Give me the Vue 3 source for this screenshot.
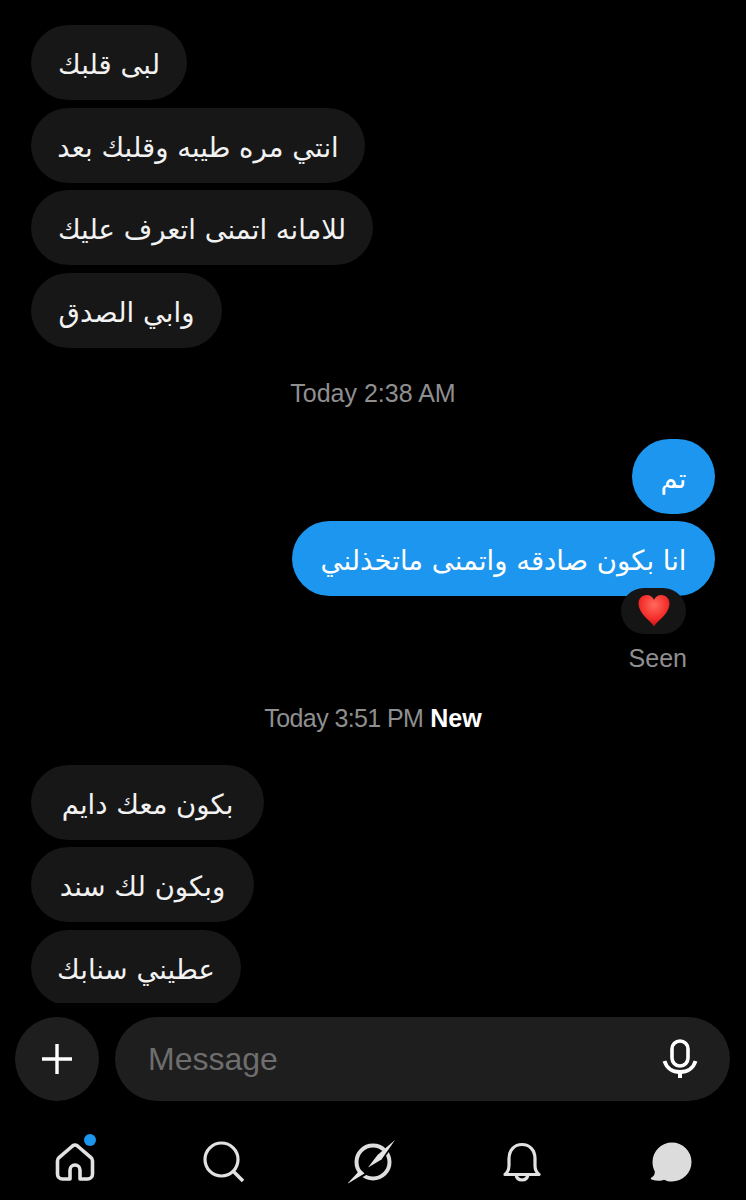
<script setup>
const firstGroup = [
  { text: 'لبى قلبك', width: 156 },
  { text: 'انتي مره طيبه وقلبك بعد', width: 334 },
  { text: 'للامانه اتمنى اتعرف عليك', width: 342 },
  { text: 'وابي الصدق', width: 191 }
]
const secondGroup = [
  { text: 'بكون معك دايم', width: 233 },
  { text: 'وبكون لك سند', width: 223 },
  { text: 'عطيني سنابك', width: 210 }
]
const sent = [
  { text: 'تم', width: 83 },
  { text: 'انا بكون صادقه واتمنى ماتخذلني', width: 423 }
]
</script>

<template>
  <div class="screen">
    <div class="messages">
      <div class="group">
        <div
          v-for="m in firstGroup"
          :key="m.text"
          class="bubble in"
          dir="rtl"
          :style="{ width: m.width + 'px' }"
        >{{ m.text }}</div>
      </div>

      <p class="stamp first-stamp">Today 2:38 AM</p>

      <div class="group mine">
        <div
          v-for="m in sent"
          :key="m.text"
          class="bubble out"
          dir="rtl"
          :style="{ width: m.width + 'px' }"
        >{{ m.text }}</div>
        <div class="reaction">
          <svg width="32" height="33" viewBox="0 0 32 33">
            <defs>
              <radialGradient id="heart" cx="0.5" cy="0.32" r="0.7">
                <stop offset="0" stop-color="#ff6a5e" />
                <stop offset="0.6" stop-color="#f5302c" />
                <stop offset="1" stop-color="#c40f14" />
              </radialGradient>
            </defs>
            <path d="M16 32.500C13 27 .5 20 .5 9.500.5 4.500 4.200 1 8.700 1c3.200 0 5.900 1.700 7.300 4.700C17.400 2.700 20.100 1 23.300 1c4.500 0 8.200 3.500 8.200 8.500C31.500 20 19 27 16 32.500z" fill="url(#heart)" />
          </svg>
        </div>
        <p class="seen">Seen</p>
      </div>

      <p class="stamp second-stamp"><span class="tight">Today 3:51 PM</span> <b>New</b></p>

      <div class="group">
        <div
          v-for="m in secondGroup"
          :key="m.text"
          class="bubble in"
          dir="rtl"
          :style="{ width: m.width + 'px' }"
        >{{ m.text }}</div>
      </div>
    </div>

    <div class="composer">
      <button class="plus">
        <svg width="34" height="34" viewBox="0 0 34 34">
          <path d="M17 2v30M2 17h30" stroke="#fff" stroke-width="3.400" fill="none" />
        </svg>
      </button>
      <div class="field">
        <span class="placeholder">Message</span>
        <svg class="mic" width="36" height="40" viewBox="0 0 36 40" fill="none" stroke="#fff">
          <rect x="10" y="2" width="16" height="25" rx="8" stroke-width="3.600" />
          <path d="M2.500 22c2 7 8 11 15.500 11s13.500-4 15.500-11" stroke-width="3.800" />
          <path d="M18 32v7" stroke-width="4" />
        </svg>
      </div>
    </div>

    <nav class="tabs">
      <div class="tab">
        <span class="dot"></span>
        <svg width="42" height="42" viewBox="0 0 42 42" fill="none" stroke="#e2e2e2" stroke-width="3.600">
          <path d="M3.500 20Q3.500 18 5 16.700L18.500 5Q21 3 23.500 5L37 16.700Q38.500 18 38.500 20V33a5 5 0 0 1-5 5H26V29a5 5 0 0 0-10 0V38H8.500a5 5 0 0 1-5-5z" stroke-linejoin="round" />
        </svg>
      </div>
      <div class="tab">
        <svg width="42" height="42" viewBox="0 0 42 42" fill="none" stroke="#e2e2e2" stroke-width="3.200">
          <circle cx="18.500" cy="18.500" r="16.500" />
          <path d="M30.500 30.500l9.500 9.500" stroke-width="3.600" />
        </svg>
      </div>
      <div class="tab">
        <svg width="50" height="50" viewBox="0 0 50 50" fill="none">
          <circle cx="25" cy="25" r="16.500" stroke="#dedede" stroke-width="4" />
          <path d="M50 2 35 23 20 34 15 29z" fill="#000" />
          <path d="M4 46 14 31 20 37z" fill="#000" />
          <path d="M47 3 33.500 22.500 20 30.500 29.500 18z" fill="#e6e6e6" />
          <path d="M-1 47 12.500 32.500 16.500 36.500z" fill="#e6e6e6" />
        </svg>
      </div>
      <div class="tab">
        <svg width="42" height="42" viewBox="0 0 42 42" fill="none" stroke="#e2e2e2" stroke-width="3.200">
          <path d="M4 33.500c2.500-2 4-5 4-9v-7C8 9 13.500 3.500 21 3.500S34 9 34 17.500v7c0 4 1.500 7 4 9z" stroke-linejoin="round" />
          <path d="M15 33.500c.5 3.500 3 5.500 6 5.500s5.500-2 6-5.500" />
        </svg>
      </div>
      <div class="tab">
        <svg width="44" height="44" viewBox="0 0 44 44">
          <path d="M23 2.500a19.500 19.500 0 1 1 0 39c-3 0-5.500-.5-8-1.800-3 1.500-8 1.300-12.500-.2-1-.5-1-1.500 0-2 2-1 3.500-3 3.300-6C4.300 28.500 3.500 25.500 3.500 22A19.500 19.500 0 0 1 23 2.500z" fill="#dcdcdc" />
        </svg>
      </div>
    </nav>
  </div>
</template>

<style>
body {
  background: #000;
}
</style>

<style scoped>
.screen {
  width: 746px;
  height: 1200px;
  background: #000;
  display: flex;
  flex-direction: column;
  overflow: hidden;
  font-family: "Liberation Sans", Arial, sans-serif;
}

.messages {
  height: 1003px;
  flex: none;
  overflow: hidden;
  padding: 25px 31px 0;
  box-sizing: border-box;
}

.group {
  display: flex;
  flex-direction: column;
  align-items: flex-start;
  gap: 7.500px;
}

.group.mine {
  align-items: flex-end;
}

.bubble {
  height: 75px;
  box-sizing: border-box;
  display: flex;
  align-items: center;
  justify-content: center;
  padding-top: 3px;
  border-radius: 38px;
  font-family: "DejaVu Sans", sans-serif;
  font-size: 27.500px;
  white-space: nowrap;
  color: #f2f2f2;
}

.in {
  background: #171717;
}

.out {
  background: #1d96ef;
  color: #fff;
}

.stamp {
  margin: 0;
  text-align: center;
  font-size: 25px;
  line-height: 30px;
  color: #8f8f8f;
}

.stamp b {
  color: #fff;
  font-weight: 700;
}

.tight {
  letter-spacing: -0.6px;
}

.first-stamp {
  margin: 30px 0 31px;
}

.second-stamp {
  margin: 30px 0 31.500px;
}

.reaction {
  width: 65px;
  height: 46px;
  margin: -16px 29px 0 0;
  border-radius: 23px;
  background: #151515;
  display: flex;
  align-items: center;
  justify-content: center;
  z-index: 1;
}

.seen {
  margin: 2px 28px 0 0;
  font-size: 25px;
  line-height: 30px;
  color: #8f8f8f;
}

.composer {
  display: flex;
  gap: 16px;
  margin-top: 14px;
  padding: 0 16px 0 15px;
}

.plus {
  width: 84px;
  height: 84px;
  flex: none;
  border: 0;
  padding: 0;
  border-radius: 50%;
  background: #1e1e1e;
  display: flex;
  align-items: center;
  justify-content: center;
}

.field {
  flex: 1;
  height: 84px;
  border-radius: 42px;
  background: #1e1e1e;
  display: flex;
  align-items: center;
  justify-content: space-between;
  padding: 0 32px 0 33px;
}

.placeholder {
  font-size: 32px;
  color: #6e6e6e;
}

.tabs {
  display: flex;
  justify-content: space-between;
  padding: 0 32px;
  margin-top: 36px;
}

.tab {
  position: relative;
  width: 86px;
  height: 50px;
  display: flex;
  align-items: center;
  justify-content: center;
}

.dot {
  position: absolute;
  top: -3px;
  left: 52px;
  width: 12px;
  height: 12px;
  border-radius: 50%;
  background: #1d96ef;
}
</style>
